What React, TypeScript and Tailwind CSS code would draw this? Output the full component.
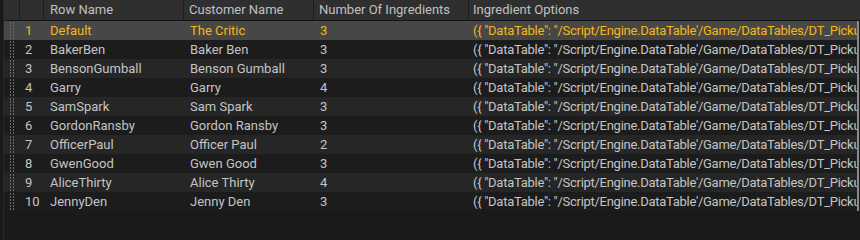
import React from "react";

const rows = [
  ["Default", "The Critic", "3"],
  ["BakerBen", "Baker Ben", "3"],
  ["BensonGumball", "Benson Gumball", "3"],
  ["Garry", "Garry", "4"],
  ["SamSpark", "Sam Spark", "3"],
  ["GordonRansby", "Gordon Ransby", "3"],
  ["OfficerPaul", "Officer Paul", "2"],
  ["GwenGood", "Gwen Good", "3"],
  ["AliceThirty", "Alice Thirty", "4"],
  ["JennyDen", "Jenny Den", "3"],
];

const opts = `({ "DataTable": "/Script/Engine.DataTable'/Game/DataTables/DT_PickupItems.DT_PickupItems'" })`;

const cols = "grid grid-cols-[16px_24px_140px_130px_155px_1fr]";

function Handle() {
  return (
    <div className="flex h-full items-stretch justify-center gap-[2px] py-[1px]">
      <div className="w-px bg-[repeating-linear-gradient(to_bottom,#6a6a6a_0_2px,transparent_2px_3px)]" />
      <div className="w-px bg-[repeating-linear-gradient(to_bottom,#6a6a6a_0_2px,transparent_2px_3px)]" />
    </div>
  );
}

export default function App() {
  return (
    <div className="flex h-[240px] w-[860px] overflow-hidden bg-[#1a1a1a] font-['Roboto',sans-serif] text-[13px] text-[#c4c4c4]">
      <div className="w-[4px] border-r border-[#262626]" />
      <div className="flex min-w-0 flex-1 flex-col">
        {/* header */}
        <div className={`${cols} h-[21px] border-b border-[#151515] bg-[#2f2f2f] leading-[20px] text-[#c0c0c0]`}>
          <div className="border-r border-[#1c1c1c]" />
          <div className="border-r border-[#1c1c1c]" />
          <div className="border-r border-[#1c1c1c] pl-[6px]">Row Name</div>
          <div className="border-r border-[#1c1c1c] pl-[5px]">Customer Name</div>
          <div className="border-r border-[#1c1c1c] pl-[5px]">Number Of Ingredients</div>
          <div className="pl-[4px] whitespace-nowrap overflow-hidden">Ingredient Options</div>
        </div>
        {/* body */}
        <div className="flex">
          <div className="min-w-0 flex-1">
            {rows.map((r, i) => {
              const sel = i === 0;
              const bg = sel ? "bg-[#474747]" : i % 2 === 1 ? "bg-[#1c1c1c]" : "bg-[#262626]";
              return (
                <div
                  key={i}
                  className={`${cols} h-[19px] leading-[19px] ${bg} ${sel ? "text-[#f5b618]" : ""}`}
                >
                  <Handle />
                  <div className="pl-[5px]">{i + 1}</div>
                  <div className="pl-[6px] whitespace-nowrap overflow-hidden">{r[0]}</div>
                  <div className="pl-[6px] whitespace-nowrap overflow-hidden">{r[1]}</div>
                  <div className="pl-[6px]">{r[2]}</div>
                  <div className="pl-[4px] whitespace-nowrap overflow-hidden tracking-[-0.28px]">{opts}</div>
                </div>
              );
            })}
          </div>
          <div className="flex w-[3px] justify-start">
            <div className="w-[2px] bg-[#8a8a8a]" />
          </div>
        </div>
      </div>
    </div>
  );
}
